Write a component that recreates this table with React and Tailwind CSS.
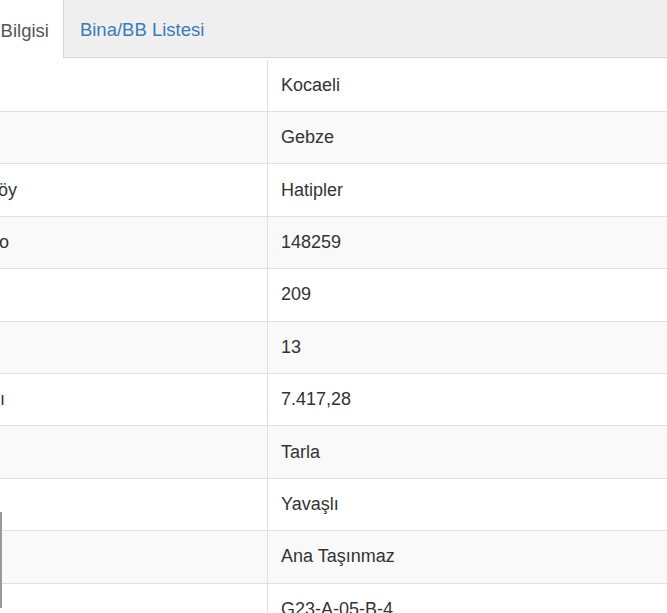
import React from 'react'

const rows = [
  ['İl', 'Kocaeli'],
  ['İlçe', 'Gebze'],
  ['Mahalle/Köy', 'Hatipler'],
  ['Mahalle No', '148259'],
  ['Ada', '209'],
  ['Parsel', '13'],
  ['Tapu Alanı', '7.417,28', 'pl-[15px]'],
  ['Nitelik', 'Tarla'],
  ['Mevkii', 'Yavaşlı'],
  ['Zemin Tipi', 'Ana Taşınmaz'],
  ['Pafta', 'G23-A-05-B-4'],
]

function App() {
  return (
    <div className="relative w-[667px] h-[613px] overflow-hidden bg-white font-['Liberation_Sans',Arial,sans-serif] text-[#333]">
      <div className="-ml-[94px] w-[761px]">
        {/* tabs */}
        <div className="flex h-[58px] bg-[#efefef] border-b border-[#d4d4d4] pl-[23px]">
          <div className="flex items-center h-[58px] bg-white border-r border-[#d4d4d4] px-[14px] pt-[3px] text-[18.5px] text-[#555]">
            Parsel Bilgisi
          </div>
          <div className="flex items-center pl-[16px] pr-4 pt-[3px] text-[18.5px] text-[#3b7bb8]">
            Bina/BB Listesi
          </div>
        </div>

        {/* table */}
        <div className="text-[18px]">
          {rows.map(([label, value, pad], i) => (
            <div
              key={label}
              className={
                'flex border-b border-[#e0e0e0] ' +
                (i === 0 ? 'h-[54px] pt-[2px] ' : 'h-[52.4px] ') +
                (i % 2 === 1 ? 'bg-[#f9f9f9]' : 'bg-white')
              }
            >
              <div className={'w-[361px] flex items-center whitespace-nowrap ' + (pad || 'pl-[12px]')}>
                {label}
              </div>
              <div className="flex-1 flex items-center border-l border-[#e0e0e0] pl-[13px]">
                {value}
              </div>
            </div>
          ))}
        </div>
      </div>

      {/* resize handle at the left edge */}
      <div className="absolute left-0 top-[512px] h-[96px] w-[2px] bg-[#9a9a9a]" />
    </div>
  )
}

export default App
